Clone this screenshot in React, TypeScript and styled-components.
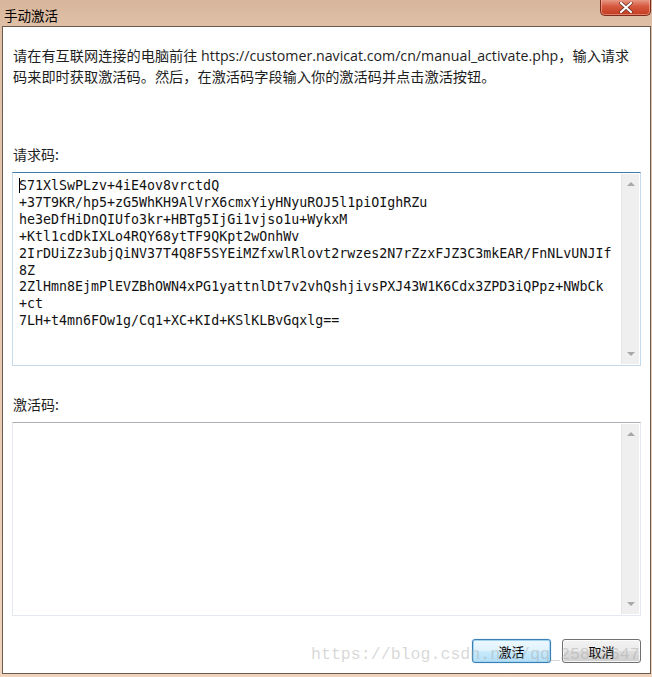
import { FC } from "react";
import styled, { createGlobalStyle } from "styled-components";

const GlobalStyle = createGlobalStyle`
  html, body {
    margin: 0;
    padding: 0;
    background: #e9cbb3;
  }
`;

const requestLines = [
  "S71XlSwPLzv+4iE4ov8vrctdQ",
  "+37T9KR/hp5+zG5WhKH9AlVrX6cmxYiyHNyuROJ5l1piOIghRZu",
  "he3eDfHiDnQIUfo3kr+HBTg5IjGi1vjso1u+WykxM",
  "+Ktl1cdDkIXLo4RQY68ytTF9QKpt2wOnhWv",
  "2IrDUiZz3ubjQiNV37T4Q8F5SYEiMZfxwlRlovt2rwzes2N7rZzxFJZ3C3mkEAR/FnNLvUNJIf",
  "8Z",
  "2ZlHmn8EjmPlEVZBhOWN4xPG1yattnlDt7v2vhQshjivsPXJ43W1K6Cdx3ZPD3iQPpz+NWbCk",
  "+ct",
  "7LH+t4mn6FOw1g/Cq1+XC+KId+KSlKLBvGqxlg==",
];

const Window = styled.div`
  position: relative;
  width: 652px;
  height: 677px;
  box-sizing: border-box;
  padding: 0 1px 3px 2px;
  display: flex;
  flex-direction: column;
  background: linear-gradient(180deg, #d7b59b 0px, #dfc0a7 26px, #efd3bd 100%);
  font-family: "Open Sans", "Noto Sans CJK SC", sans-serif;
  color: #000;
  overflow: hidden;
`;

const TitleBar = styled.div`
  height: 26px;
  display: flex;
  align-items: flex-start;
  justify-content: space-between;
`;

const Title = styled.span`
  font-family: "Noto Sans CJK SC", sans-serif;
  font-size: 13.5px;
  line-height: 16px;
  margin: 7px 0 0 2px;
`;

const CloseButton = styled.div`
  width: 51px;
  height: 17px;
  margin: -1px 0 0 0;
  box-sizing: border-box;
  border: 1px solid #7d2a1d;
  border-top: none;
  border-radius: 0 0 5px 5px;
  background: linear-gradient(180deg, #e9a28f 0%, #d65a3f 45%, #c23a22 100%);
  box-shadow: inset 0 0 0 1px rgba(255, 200, 180, 0.5);
  display: flex;
  align-items: center;
  justify-content: center;
`;

const Panel = styled.div`
  flex: 1;
  background: #fff;
  border: 1px solid #6b5a4e;
  display: flex;
  flex-direction: column;
  padding: 0 9px 0 9px;
`;

const Intro = styled.p`
  margin: 18px 0 0 1px;
  font-size: 14.2px;
  line-height: 21px;
  color: #1e1e1e;
`;

const FieldLabel = styled.div<{ $top: number }>`
  font-family: "Noto Sans CJK SC", sans-serif;
  font-size: 14px;
  line-height: 20px;
  margin: ${(p) => p.$top}px 0 0 1px;
  color: #1e1e1e;
`;

const TextBox = styled.div<{ $focused?: boolean }>`
  position: relative;
  margin-top: 8px;
  height: 194px;
  box-sizing: border-box;
  border: 1px solid ${(p) => (p.$focused ? "#c5daed" : "#e3e9ef")};
  border-top-color: ${(p) => (p.$focused ? "#3d7bad" : "#abadb3")};
  background: #fff;
  display: flex;
`;

const CodeText = styled.pre`
  flex: 1;
  margin: 0;
  padding: 5px 0 0 6px;
  font-family: "DejaVu Sans Mono", monospace;
  font-size: 13.3px;
  line-height: 16.9px;
  color: #111;
  white-space: pre;
  overflow: hidden;
`;

const Caret = styled.span`
  display: inline-block;
  width: 1px;
  height: 15px;
  margin-right: -1px;
  vertical-align: -3px;
  background: #000;
`;

const ScrollBar = styled.div`
  width: 17px;
  margin: 1px 1px 1px 0;
  background: #efefef;
  border-left: 1px solid #e6e6e6;
  display: flex;
  flex-direction: column;
  justify-content: space-between;
  align-items: center;
  padding: 8px 0 8px 0;
`;

const Arrow = styled.span<{ $down?: boolean }>`
  width: 0;
  height: 0;
  border-left: 4px solid transparent;
  border-right: 4px solid transparent;
  ${(p) =>
    p.$down
      ? "border-top: 4px solid #a8a8a8;"
      : "border-bottom: 4px solid #a8a8a8;"}
`;

const ButtonRow = styled.div`
  margin-top: 23px;
  display: flex;
  justify-content: flex-end;
  gap: 11px;
`;

const Button = styled.button<{ $primary?: boolean }>`
  width: 79px;
  height: 24px;
  padding: 0;
  border-radius: 3px;
  font-family: "Noto Sans CJK SC", sans-serif;
  font-size: 13px;
  color: #000;
  border: 1px solid ${(p) => (p.$primary ? "#3c7fb1" : "#707070")};
  background: ${(p) =>
    p.$primary
      ? "linear-gradient(180deg, #eef8fe 0%, #dff2fc 50%, #c9ebfd 51%, #b3def6 100%)"
      : "linear-gradient(180deg, #f2f2f2 0%, #ebebeb 50%, #dddddd 51%, #cfcfcf 100%)"};
  box-shadow: ${(p) =>
    p.$primary
      ? "inset 0 0 0 1px #9fd5f3, 0 0 1px #4ba3dc"
      : "inset 0 0 0 1px rgba(255, 255, 255, 0.8)"};
`;

const Watermark = styled.div`
  position: absolute;
  left: 311px;
  top: 644px;
  font-family: "Liberation Mono", monospace;
  font-size: 16.6px;
  line-height: 22px;
  color: rgba(160, 160, 160, 0.42);
  pointer-events: none;
  white-space: nowrap;
`;

const CodeField: FC<{ lines: string[]; focused?: boolean }> = ({ lines, focused }) => (
  <TextBox $focused={focused}>
    <CodeText>
      {focused && <Caret />}
      {lines.join("\n")}
    </CodeText>
    <ScrollBar>
      <Arrow />
      <Arrow $down />
    </ScrollBar>
  </TextBox>
);

export default function App() {
  return (
    <>
      <GlobalStyle />
      <Window>
        <TitleBar>
          <Title>手动激活</Title>
          <CloseButton>
            <svg width="14" height="11" viewBox="0 0 14 11">
              <path
                d="M2 1 L12 10 M12 1 L2 10"
                stroke="#5a2a20"
                strokeWidth="3.4"
                strokeLinecap="round"
              />
              <path
                d="M2 1 L12 10 M12 1 L2 10"
                stroke="#fff"
                strokeWidth="2.2"
                strokeLinecap="round"
              />
            </svg>
          </CloseButton>
        </TitleBar>
        <Panel>
          <Intro>
            请在有互联网连接的电脑前往 https://customer.navicat.com/cn/manual_activate.php，输入请求
            <br />
            码来即时获取激活码。然后，在激活码字段输入你的激活码并点击激活按钮。
          </Intro>
          <FieldLabel $top={57}>请求码:</FieldLabel>
          <CodeField lines={requestLines} focused />
          <FieldLabel $top={28}>激活码:</FieldLabel>
          <CodeField lines={[]} />
          <ButtonRow>
            <Button $primary>激活</Button>
            <Button>取消</Button>
          </ButtonRow>
        </Panel>
        <Watermark>https://blog.csdn.net/qq_25862647</Watermark>
      </Window>
    </>
  );
}
